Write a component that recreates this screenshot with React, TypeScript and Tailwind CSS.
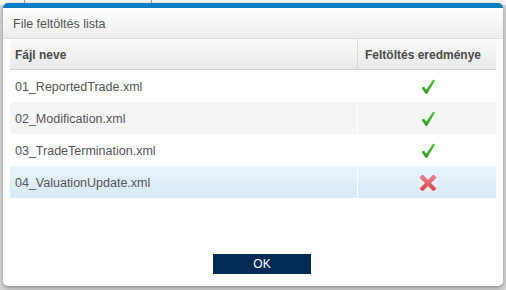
import React from 'react';

const FILES = [
  { name: '01_ReportedTrade.xml', ok: true },
  { name: '02_Modification.xml', ok: true },
  { name: '03_TradeTermination.xml', ok: true },
  { name: '04_ValuationUpdate.xml', ok: false },
];

function CheckIcon() {
  return (
    <svg width="16" height="17" viewBox="0 0 16 17">
      <defs>
        <linearGradient id="chk" x1="0" y1="0" x2="0" y2="1">
          <stop offset="0" stopColor="#5cc24a" />
          <stop offset="1" stopColor="#2e9a2a" />
        </linearGradient>
      </defs>
      <path d="M1.5 10 L4 8.4 L6.4 11.8 L13 1.5 L15 2.8 L7 16 L5.8 16 Z" fill="url(#chk)" />
    </svg>
  );
}

function CrossIcon() {
  return (
    <svg width="20" height="20" viewBox="0 0 20 20">
      <defs>
        <linearGradient id="crs" x1="0" y1="0" x2="0" y2="1">
          <stop offset="0" stopColor="#f08a94" />
          <stop offset="1" stopColor="#d83e4c" />
        </linearGradient>
      </defs>
      <rect x="1" y="1" width="18" height="18" fill="#eceff2" opacity="0.7" />
      <path
        d="M2 4.5 L4.5 2 L10 7.5 L15.5 2 L18 4.5 L12.5 10 L18 15.5 L15.5 18 L10 12.5 L4.5 18 L2 15.5 L7.5 10 Z"
        fill="url(#crs)"
        stroke="#c93544"
        strokeWidth="0.6"
      />
    </svg>
  );
}

export default function App() {
  return (
    <div className="relative w-[506px] h-[290px] bg-[#d6d6d6] font-['Liberation_Sans',Arial,sans-serif] overflow-hidden">
      {/* page behind the dialog */}
      <div className="flex h-[6px] bg-[#f4f4f4] border-b border-[#cfcfcf]">
        <div className="w-[25px] border-r border-[#9a9a9a]" />
        <div className="w-[127px] border-r border-[#9a9a9a]" />
      </div>

      {/* dialog */}
      <div className="absolute left-[3px] top-[3px] w-[500px] h-[283px] rounded-[5px] bg-white border-t-[5px] border-[#0a7dbf] shadow-[0_2px_4px_rgba(0,0,0,0.35)] flex flex-col">
        <div className="h-[31px] flex items-center pl-[10px] pt-[3px] text-[12.5px] text-[#555] bg-gradient-to-b from-white to-[#ececec] border-b border-[#dcdcdc]">
          File feltöltés lista
        </div>

        <div className="mx-[7px]">
          <div className="flex h-[31px] bg-gradient-to-b from-[#fafafa] to-[#e9e9e9] border-b border-[#cfcfcf] text-[12px] font-bold text-[#4a4a4a]">
            <div className="w-[348px] flex items-center pl-[5px] pt-[1px] border-r border-[#d9d9d9]">Fájl neve</div>
            <div className="flex-1 flex items-center pl-[7px] pt-[1px]">Feltöltés eredménye</div>
          </div>

          {FILES.map((f, i) => (
            <div
              key={f.name}
              className={`flex h-[32px] text-[12.5px] text-[#555] ${
                i === 3
                  ? 'bg-gradient-to-b from-[#e9f4fb] to-[#d6eaf8]'
                  : i % 2 === 1
                  ? 'bg-[#f5f5f5]'
                  : 'bg-white'
              }`}
            >
              <div className="w-[348px] flex items-center pl-[5px] pt-[2px] border-r border-white">{f.name}</div>
              <div className="flex-1 flex items-center justify-center pl-[1px] pt-[1px]">
                {f.ok ? <CheckIcon /> : <CrossIcon />}
              </div>
            </div>
          ))}
        </div>

        <div className="flex-1" />
        <div className="pl-[210px] pb-[12px]">
          <button className="w-[98px] h-[20px] bg-[#022a54] text-white text-[12px] flex items-center justify-center">
            OK
          </button>
        </div>
      </div>
    </div>
  );
}
